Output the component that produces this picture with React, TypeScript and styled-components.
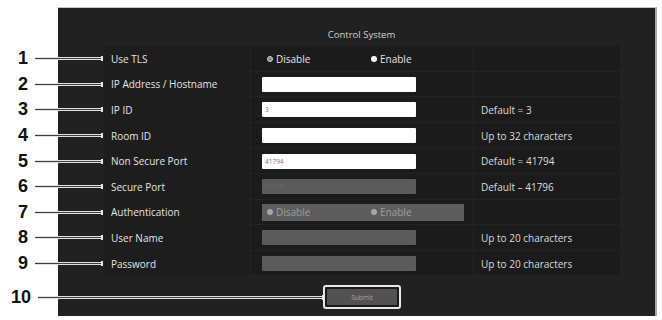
import styled, { createGlobalStyle } from "styled-components";

type Field = "text" | "disabled" | "radio" | "radioDisabled";

type Setting = {
  label: string;
  field: Field;
  value?: string;
  note?: string;
};

const settings: Setting[] = [
  { label: "Use TLS", field: "radio" },
  { label: "IP Address / Hostname", field: "text" },
  { label: "IP ID", field: "text", value: "3", note: "Default = 3" },
  { label: "Room ID", field: "text", note: "Up to 32 characters" },
  { label: "Non Secure Port", field: "text", value: "41794", note: "Default = 41794" },
  { label: "Secure Port", field: "disabled", value: "41796", note: "Default – 41796" },
  { label: "Authentication", field: "radioDisabled" },
  { label: "User Name", field: "disabled", note: "Up to 20 characters" },
  { label: "Password", field: "disabled", note: "Up to 20 characters" },
];

const GlobalStyle = createGlobalStyle`
  html, body {
    margin: 0;
    background: #ffffff;
  }
  body {
    font-family: "Open Sans", "Noto Sans", sans-serif;
  }
`;

const Page = styled.main`
  width: 662px;
  height: 320px;
  padding-top: 7px;
  box-sizing: border-box;
  overflow: hidden;
`;

const Panel = styled.section`
  margin-left: 58px;
  width: 599px;
  height: 309px;
  box-sizing: border-box;
  background: #212121;
  border-top: 1px solid #c4c4c4;
  border-right: 2px solid #a8a8a8;
  padding: 21px 0 0 46px;
  display: flex;
  flex-direction: column;
`;

const Title = styled.h1`
  margin: 0 0 5px;
  width: 515px;
  text-align: center;
  font-size: 9.5px;
  font-weight: 400;
  line-height: 12px;
  color: #d2d2d2;
`;

const Table = styled.div`
  width: 516px;
  background: #1b1b1b;
  display: flex;
  flex-direction: column;
`;

const Row = styled.div`
  position: relative;
  height: 25.6px;
  display: grid;
  grid-template-columns: 146px 223px 147px;
  box-shadow: inset 0 -1px 0 #232323;
`;

const Cell = styled.div<{ $divider?: boolean }>`
  display: flex;
  align-items: center;
  box-sizing: border-box;
  font-size: 10px;
  color: #e4e4e4;
  white-space: nowrap;
  border-left: ${(p) => (p.$divider ? "1px solid #242424" : "none")};
`;

const LabelCell = styled(Cell)`
  padding-left: 7px;
  background: #1d1d1d;
`;

const FieldCell = styled(Cell)`
  padding-left: 11px;
`;

const NoteCell = styled(Cell)`
  padding-left: 7px;
  color: #dcdcdc;
`;

const Input = styled.input<{ $disabled?: boolean }>`
  appearance: none;
  box-sizing: border-box;
  width: 154px;
  height: 15px;
  margin: 0;
  padding: 0 3px;
  border: none;
  border-radius: 1px;
  outline: none;
  background: ${(p) => (p.$disabled ? "#5b5b5b" : "#ffffff")};
  color: ${(p) => (p.$disabled ? "#686868" : "#7a7a7a")};
  font-family: "Open Sans", sans-serif;
  font-size: 6.5px;
`;

const RadioGroup = styled.div<{ $disabled?: boolean }>`
  width: 202px;
  height: 17px;
  box-sizing: border-box;
  padding-left: 5px;
  display: grid;
  grid-template-columns: 104px 1fr;
  align-items: center;
  background: ${(p) => (p.$disabled ? "#5d5d5d" : "transparent")};
  color: ${(p) => (p.$disabled ? "#9e9e9e" : "#e4e4e4")};
`;

const Radio = styled.span`
  display: inline-flex;
  align-items: center;
  gap: 3px;
`;

const Dot = styled.span<{ $state: "on" | "off" | "dim" }>`
  width: 6px;
  height: 6px;
  border-radius: 50%;
  box-sizing: border-box;
  background: ${(p) => (p.$state === "on" ? "#ffffff" : p.$state === "off" ? "#8a8a8a" : "#a6a6a6")};
  border: ${(p) => (p.$state === "off" ? "1.5px solid #cfcfcf" : "none")};
`;

const Footer = styled.div`
  width: 516px;
  display: flex;
  justify-content: center;
  padding-top: 9px;
`;

const SubmitFrame = styled.div`
  position: relative;
  padding: 2px;
  border: 2px solid #e8e8e8;
  border-radius: 3px;
  background: #1b1b1b;
`;

const SubmitButton = styled.button`
  display: block;
  width: 70px;
  height: 16px;
  border: none;
  border-radius: 1px;
  background: #525252;
  color: #a6a6a6;
  font-family: "Open Sans", sans-serif;
  font-size: 6.5px;
  padding: 0;
`;

const Callout = styled.div<{ $reach: number }>`
  position: absolute;
  top: 50%;
  right: calc(100% + 2px);
  width: ${(p) => p.$reach}px;
  height: 20px;
  margin-top: -10px;
  display: flex;
  align-items: center;
  gap: 7px;
  pointer-events: none;
`;

const Number = styled.span`
  font-family: "Liberation Sans", Arial, sans-serif;
  font-weight: 700;
  font-size: 18px;
  color: #111111;
  text-align: right;
  min-width: 20px;
`;

const Leader = styled.span`
  flex: 1;
  height: 1px;
  background: #3c3c3c;
  box-shadow: 0 -1px 0 #e2e2e2, 0 1px 0 #e2e2e2;
  position: relative;
  &::after {
    content: "";
    position: absolute;
    right: -1px;
    top: -2px;
    width: 2px;
    height: 5px;
    background: #e8e8e8;
  }
`;

function renderField(s: Setting) {
  switch (s.field) {
    case "text":
      return <Input readOnly defaultValue={s.value ?? ""} />;
    case "disabled":
      return <Input readOnly $disabled defaultValue={s.value ?? ""} />;
    case "radio":
      return (
        <RadioGroup>
          <Radio>
            <Dot $state="off" />
            Disable
          </Radio>
          <Radio>
            <Dot $state="on" />
            Enable
          </Radio>
        </RadioGroup>
      );
    case "radioDisabled":
      return (
        <RadioGroup $disabled>
          <Radio>
            <Dot $state="dim" />
            Disable
          </Radio>
          <Radio>
            <Dot $state="dim" />
            Enable
          </Radio>
        </RadioGroup>
      );
  }
}

const App = () => {
  return (
    <Page>
      <GlobalStyle />
      <Panel>
        <Title>Control System</Title>
        <Table>
          {settings.map((s, i) => (
            <Row key={s.label}>
              <Callout $reach={94}>
                <Number>{i + 1}</Number>
                <Leader />
              </Callout>
              <LabelCell>{s.label}</LabelCell>
              <FieldCell $divider>{renderField(s)}</FieldCell>
              <NoteCell $divider>{s.note}</NoteCell>
            </Row>
          ))}
        </Table>
        <Footer>
          <SubmitFrame>
            <Callout $reach={312}>
              <Number>10</Number>
              <Leader />
            </Callout>
            <SubmitButton type="button">Submit</SubmitButton>
          </SubmitFrame>
        </Footer>
      </Panel>
    </Page>
  );
};

export default App;
